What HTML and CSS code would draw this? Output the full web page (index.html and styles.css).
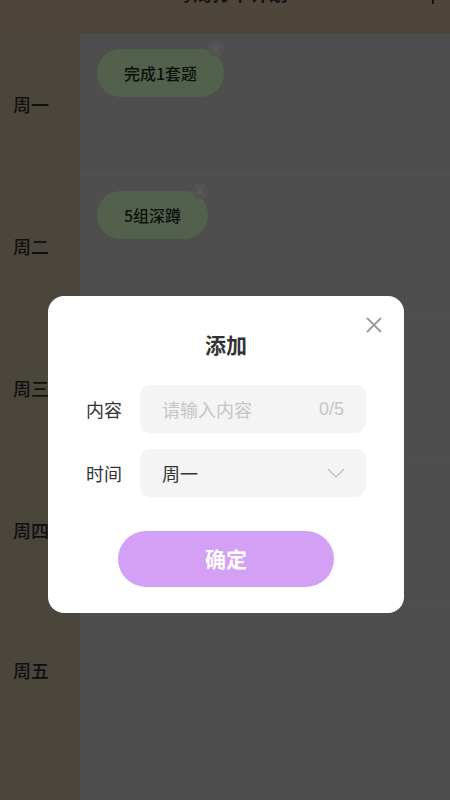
FILE: index.html
```html
<!DOCTYPE html>
<html lang="zh">
<head>
<meta charset="utf-8">
<link rel="stylesheet" href="styles.css">
</head>
<body>
<div class="page">
  <header class="topbar">
    <span class="title">每周打卡计划</span>
    <span class="add-btn">
      <svg width="16" height="16" viewBox="0 0 16 16"><path d="M8 1v14M1 8h14" stroke="#333" stroke-width="2" fill="none"/></svg>
    </span>
  </header>
  <div class="week">
    <div class="row">
      <div class="day">周一</div>
      <div class="tasks">
        <div class="pill">完成1套题<span class="pill-close"><svg width="8" height="8" viewBox="0 0 8 8"><path d="M1 1l6 6M7 1l-6 6" stroke="#e8e8e8" stroke-width="1.4"/></svg></span></div>
      </div>
    </div>
    <div class="row">
      <div class="day">周二</div>
      <div class="tasks">
        <div class="pill">5组深蹲<span class="pill-close"><svg width="8" height="8" viewBox="0 0 8 8"><path d="M1 1l6 6M7 1l-6 6" stroke="#e8e8e8" stroke-width="1.4"/></svg></span></div>
      </div>
    </div>
    <div class="row">
      <div class="day">周三</div>
      <div class="tasks"></div>
    </div>
    <div class="row">
      <div class="day">周四</div>
      <div class="tasks"></div>
    </div>
    <div class="row last">
      <div class="day">周五</div>
      <div class="tasks"></div>
    </div>
  </div>
</div>

<div class="mask">
  <div class="dialog">
    <span class="dialog-close">
      <svg width="16" height="16" viewBox="0 0 16 16"><path d="M1.5 1.5l13 13M14.5 1.5l-13 13" stroke="#9a9a9a" stroke-width="1.8" stroke-linecap="round"/></svg>
    </span>
    <div class="dialog-title">添加</div>
    <div class="form-row">
      <span class="label">内容</span>
      <div class="field">
        <span class="placeholder">请输入内容</span>
        <span class="count">0/5</span>
      </div>
    </div>
    <div class="form-row">
      <span class="label">时间</span>
      <div class="field">
        <span class="value">周一</span>
        <svg class="chev" width="18" height="10" viewBox="0 0 18 10"><path d="M1 1l8 8 8-8" stroke="#c4c4c4" stroke-width="1.5" fill="none"/></svg>
      </div>
    </div>
    <div class="actions">
      <button class="confirm">确定</button>
    </div>
  </div>
</div>
</body>
</html>
```

FILE: styles.css
```css
* { box-sizing: border-box; }
html, body {
  margin: 0;
  padding: 0;
  width: 450px;
  height: 800px;
  overflow: hidden;
  font-family: "Noto Sans CJK SC", "Noto Sans", sans-serif;
}
.page {
  width: 450px;
  height: 800px;
  overflow: hidden;
  background: #c3c3c3;
  display: flex;
  flex-direction: column;
}
.topbar {
  height: 34px;
  flex: none;
  background: #c6af94;
  display: flex;
  justify-content: center;
  align-items: flex-start;
  overflow: hidden;
  position: relative;
}
.title {
  font-size: 19px;
  line-height: 20px;
  margin-top: -17px;
  margin-left: 12px;
  font-weight: 700;
  color: #333;
}
.add-btn {
  position: absolute;
  right: 9px;
  top: -14px;
}
.week {
  flex: 1;
  display: flex;
  flex-direction: column;
}
.row {
  display: flex;
  height: 142px;
  flex: none;
}
.row.last {
  flex: 1;
  height: auto;
}
.day {
  width: 80px;
  flex: none;
  background: #bcaf96;
  display: flex;
  align-items: center;
  padding-left: 13px;
  padding-bottom: 3px;
  font-size: 18px;
  font-weight: 500;
  color: #2a2a2a;
}
.row.last .day {
  align-items: flex-start;
  padding-top: 55px;
}
.tasks {
  flex: 1;
  background: #c3c3c3;
  border-bottom: 1px solid #cdcdcd;
  padding: 15px 0 0 17px;
  display: flex;
  align-items: flex-start;
}
.row.last .tasks { border-bottom: none; }
.pill {
  position: relative;
  height: 48px;
  padding: 0 27px;
  border-radius: 24px;
  background: #d0f0bc;
  display: flex;
  align-items: center;
  font-size: 16px;
  font-weight: 500;
  color: #2a2a2a;
}
.pill-close {
  position: absolute;
  top: -8px;
  right: 0;
  width: 16px;
  height: 16px;
  border-radius: 50%;
  background: #cfcfcf;
  display: flex;
  align-items: center;
  justify-content: center;
}
.mask {
  position: fixed;
  inset: 0;
  background: rgba(0, 0, 0, 0.6);
  display: flex;
  justify-content: center;
  align-items: flex-start;
  padding-top: 296px;
  padding-left: 2px;
}
.dialog {
  position: relative;
  width: 356px;
  background: #fff;
  border-radius: 16px;
  padding: 34px 38px 26px;
  display: flex;
  flex-direction: column;
}
.dialog-close {
  position: absolute;
  top: 21px;
  right: 22px;
  display: flex;
}
.dialog-title {
  text-align: center;
  font-size: 21px;
  line-height: 28px;
  font-weight: 700;
  color: #333;
  margin-bottom: 27px;
}
.form-row {
  display: flex;
  align-items: center;
  gap: 16px;
  margin-bottom: 16px;
}
.label {
  width: 38px;
  flex: none;
  font-size: 18px;
  color: #333;
  white-space: nowrap;
}
.field {
  flex: 1;
  height: 48px;
  background: #f4f4f4;
  border-radius: 10px;
  display: flex;
  align-items: center;
  justify-content: space-between;
  padding: 0 22px;
  font-size: 18px;
}
.placeholder { color: #c6c6c6; }
.count { color: #c6c6c6; font-family: "Liberation Sans", "Noto Sans", sans-serif; font-size: 18px; }
.value { color: #333; }
.chev { margin-right: -1px; }
.actions {
  display: flex;
  justify-content: center;
  margin-top: 18px;
}
.confirm {
  width: 216px;
  height: 56px;
  border: none;
  border-radius: 28px;
  background: #d3a0f5;
  color: #fff;
  font-family: "Noto Sans CJK SC", "Noto Sans", sans-serif;
  font-size: 21px;
  font-weight: 700;
  padding: 0 0 2px;
}
```
